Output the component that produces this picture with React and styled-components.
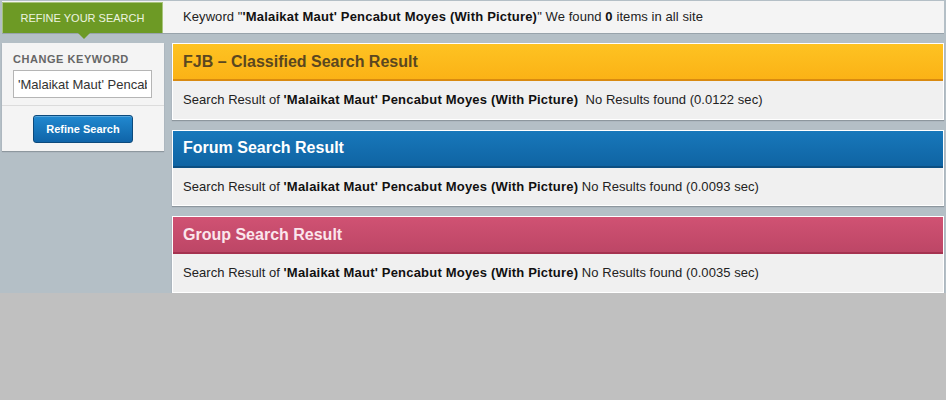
import React from "react";
import styled, { createGlobalStyle } from "styled-components";

const Global = createGlobalStyle`
  html, body { margin: 0; padding: 0; background: #c0c0c0; }
  body { font-family: "Liberation Sans", Arial, sans-serif; }
`;

const Page = styled.div`
  background: #b4bfc6;
  padding: 1px 2px 0 2px;
  height: 292px;
`;

const TopBar = styled.div`
  display: flex;
  align-items: stretch;
  height: 32px;
  background: #f4f4f4;
  box-shadow: 0 1px 0 #98a3ab;
`;

const Tab = styled.div`
  position: relative;
  width: 159px;
  margin: 1px 0 0 0;
  background: #6d9a25;
  border: 1px solid #a7c47b;
  border-bottom: none;
  color: #edf4e0;
  font-size: 11px;
  display: flex;
  align-items: center;
  justify-content: center;
  &::after {
    content: "";
    position: absolute;
    left: 75px;
    bottom: -6px;
    border-left: 6px solid transparent;
    border-right: 6px solid transparent;
    border-top: 6px solid #6d9a25;
  }
`;

const KeywordLine = styled.div`
  display: flex;
  align-items: center;
  padding-left: 20px;
  padding-bottom: 1px;
  font-size: 13px;
  letter-spacing: 0.08px;
  color: #222;
  b { color: #111; letter-spacing: 0.2px; }
`;

const Body = styled.div`
  display: flex;
  align-items: flex-start;
  gap: 8px;
  margin-top: 10px;
`;

const Sidebar = styled.div`
  width: 162px;
  background: #f4f4f4;
  box-shadow: 0 1px 1px #8d979e;
  display: flex;
  flex-direction: column;
`;

const SideTop = styled.div`
  padding: 10px 11px 7px 11px;
  border-bottom: 1px solid #dcdcdc;
`;

const Label = styled.div`
  font-size: 11px;
  font-weight: bold;
  letter-spacing: 0.55px;
  color: #666;
  margin-bottom: 5px;
`;

const Input = styled.input`
  box-sizing: border-box;
  width: 139px;
  height: 28px;
  border: 1px solid #b5b5b5;
  background: #fff;
  font-family: "Liberation Sans", Arial, sans-serif;
  font-size: 13px;
  color: #333;
  padding: 0 4px;
  outline: none;
`;

const SideBottom = styled.div`
  display: flex;
  justify-content: center;
  padding: 9px 0 8px 0;
`;

const Button = styled.button`
  width: 100px;
  height: 28px;
  border: 1px solid #0c4a7c;
  border-radius: 3px;
  background: linear-gradient(#2189d0, #0f64a8);
  box-shadow: inset 0 1px 0 rgba(255,255,255,0.25);
  color: #fff;
  font-family: "Liberation Sans", Arial, sans-serif;
  font-size: 11px;
  font-weight: bold;
  padding: 0;
`;

const Main = styled.div`
  flex: 1;
  display: flex;
  flex-direction: column;
  gap: 10px;
`;

const Panel = styled.div`
  border: 1px solid #fff;
  background: #f0f0f0;
  box-shadow: 0 1px 1px #8d979e;
`;

const PanelHead = styled.div`
  height: 35px;
  display: flex;
  align-items: center;
  padding-left: 10px;
  font-size: 16px;
  font-weight: bold;
  background: ${p => p.$bg};
  color: ${p => p.$color};
  border-bottom: 2px solid ${p => p.$border};
`;

const PanelBody = styled.div`
  height: 37.5px;
  display: flex;
  align-items: center;
  padding-left: 10px;
  font-size: 13px;
  letter-spacing: 0.05px;
  color: #222;
  b { color: #111; letter-spacing: 0.2px; }
`;

const Line = styled.span`
  white-space: pre;
`;

const panels = [
  {
    title: "FJB – Classified Search Result",
    bg: "linear-gradient(#fec322, #fbb216)",
    color: "#5a4720",
    border: "#d98a10",
    time: "0.0122",
    gap: "  ",
  },
  {
    title: "Forum Search Result",
    bg: "linear-gradient(#1878bb, #0f64a3)",
    color: "#fff",
    border: "#0c4f82",
    time: "0.0093",
    gap: " ",
  },
  {
    title: "Group Search Result",
    bg: "linear-gradient(#d05273, #bd4666)",
    color: "#fbe6ec",
    border: "#a53350",
    time: "0.0035",
    gap: " ",
  },
];

export default function App() {
  return (
    <>
      <Global />
      <Page>
        <TopBar>
          <Tab>REFINE YOUR SEARCH</Tab>
          <KeywordLine>
            <span>
              Keyword "<b>'Malaikat Maut' Pencabut Moyes (With Picture)</b>" We found <b>0</b> items in all site
            </span>
          </KeywordLine>
        </TopBar>
        <Body>
          <Sidebar>
            <SideTop>
              <Label>CHANGE KEYWORD</Label>
              <Input defaultValue="'Malaikat Maut' Pencabut Moyes (With Picture)" />
            </SideTop>
            <SideBottom>
              <Button>Refine Search</Button>
            </SideBottom>
          </Sidebar>
          <Main>
            {panels.map(p => (
              <Panel key={p.title}>
                <PanelHead $bg={p.bg} $color={p.color} $border={p.border}>
                  {p.title}
                </PanelHead>
                <PanelBody>
                  <Line>
                    {"Search Result of "}<b>'Malaikat Maut' Pencabut Moyes (With Picture)</b>{p.gap + "No Results found (" + p.time + " sec)"}
                  </Line>
                </PanelBody>
              </Panel>
            ))}
          </Main>
        </Body>
      </Page>
    </>
  );
}
